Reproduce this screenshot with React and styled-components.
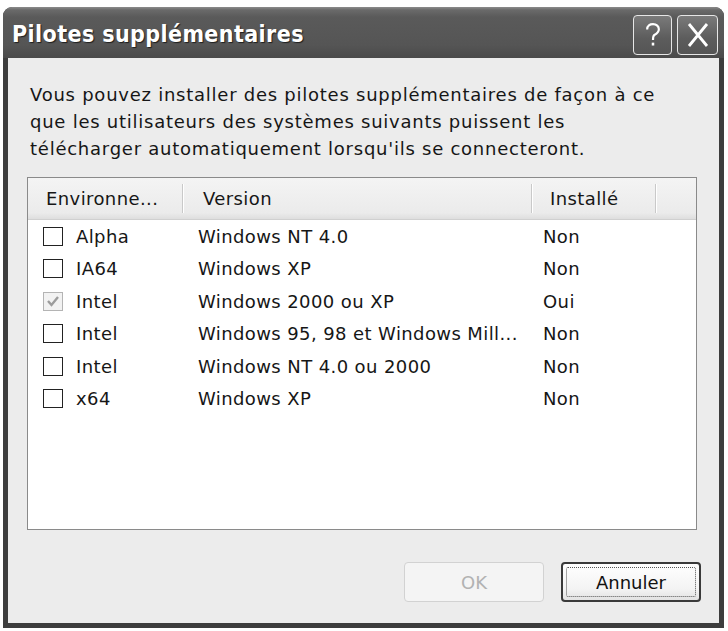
import React from "react";
import styled, { createGlobalStyle } from "styled-components";

const GlobalStyle = createGlobalStyle`
  * {
    box-sizing: border-box;
    margin: 0;
    padding: 0;
  }
  body {
    background: #ffffff;
    font-family: "DejaVu Sans", Verdana, sans-serif;
  }
`;

const Window = styled.div`
  width: 721px;
  height: 621px;
  margin: 7px 0 0 3px;
  display: flex;
  flex-direction: column;
  background: #3d3d3d;
  border-radius: 9px 9px 0 0;
  overflow: hidden;
`;

const TitleBar = styled.div`
  height: 51px;
  display: flex;
  align-items: flex-start;
  justify-content: space-between;
  padding: 8px 6px 0 9px;
  background: linear-gradient(
    to bottom,
    #8c8c8c 0px,
    #6a6a6a 3px,
    #5a5a5a 10px,
    #555555 38px,
    #4a4a4a 51px
  );
`;

const Title = styled.h1`
  font-family: "DejaVu Sans Condensed", "DejaVu Sans", sans-serif;
  font-weight: bold;
  font-size: 23px;
  line-height: 38px;
  color: #ffffff;
  text-shadow: 1px 1px 1px #1e1e1e;
  letter-spacing: 0.4px;
`;

const Controls = styled.div`
  display: flex;
  gap: 5px;
`;

const CaptionButton = styled.div`
  width: ${(p) => p.$w}px;
  height: 40px;
  border: 1.5px solid #e6e6e6;
  border-radius: 4px;
  background: linear-gradient(to bottom, #7a7a7a, #5c5c5c 60%, #555555);
  display: flex;
  align-items: center;
  justify-content: center;
`;

const Client = styled.div`
  flex: 1;
  margin: 0 5px 5px 5px;
  background: #ececec;
  padding: 23px 20px 21px 19px;
  display: flex;
  flex-direction: column;
`;

const Intro = styled.p`
  font-size: 18px;
  line-height: 27px;
  letter-spacing: 0.75px;
  color: #161616;
  padding-left: 3px;
  margin-bottom: 15px;
`;

const ListBox = styled.div`
  width: 670px;
  height: 353px;
  border: 1px solid #8a8a8a;
  background: #ffffff;
  display: flex;
  flex-direction: column;
`;

const HeaderRow = styled.div`
  height: 42px;
  display: flex;
  background: linear-gradient(to bottom, #f4f4f4, #ebebeb 85%, #dedede);
  border-bottom: 1px solid #d0d0d0;
`;

const HeaderCell = styled.div`
  width: ${(p) => p.$w}px;
  padding-left: ${(p) => p.$pad}px;
  display: flex;
  align-items: center;
  font-size: 18px;
  letter-spacing: 0.4px;
  color: #161616;
  position: relative;
  &::after {
    content: "";
    display: ${(p) => (p.$sep ? "block" : "none")};
    position: absolute;
    right: 0;
    top: 6px;
    bottom: 6px;
    width: 1px;
    background: #c9c9c9;
    box-shadow: 1px 0 0 #ffffff;
  }
`;

const Row = styled.div`
  height: 32.5px;
  display: flex;
  align-items: center;
  font-size: 18px;
  letter-spacing: 0.4px;
  color: #161616;
`;

const Cell = styled.div`
  width: ${(p) => p.$w}px;
  padding-left: ${(p) => p.$pad}px;
  display: flex;
  align-items: center;
  white-space: nowrap;
`;

const Check = styled.span`
  width: 20px;
  height: 19px;
  margin-right: 13px;
  border: 1.5px solid ${(p) => (p.$on ? "#b4b4b4" : "#222222")};
  background: ${(p) => (p.$on ? "#f2f2f2" : "#ffffff")};
  display: flex;
  align-items: center;
  justify-content: center;
`;

const Buttons = styled.div`
  margin-top: 32px;
  display: flex;
  justify-content: flex-end;
  gap: 17px;
  margin-right: -2px;
`;

const Button = styled.div`
  width: 140px;
  height: 40px;
  border-radius: 4px;
  display: flex;
  align-items: center;
  justify-content: center;
  font-size: 18px;
  color: ${(p) => (p.$disabled ? "#b2b2b2" : "#111111")};
  background: ${(p) =>
    p.$disabled
      ? "#f4f4f4"
      : "linear-gradient(to bottom, #ffffff, #f3f3f3 70%, #e2e2e2)"};
  border: ${(p) => (p.$disabled ? "1px solid #d2d2d2" : "2px solid #3a3a3a")};
  padding: 3px;
`;

const Focus = styled.span`
  flex: 1;
  align-self: stretch;
  display: flex;
  align-items: center;
  justify-content: center;
  border: 1px dotted #555555;
  border-radius: 2px;
`;

const rows = [
  { env: "Alpha", ver: "Windows NT 4.0", inst: "Non" },
  { env: "IA64", ver: "Windows XP", inst: "Non" },
  { env: "Intel", ver: "Windows 2000 ou XP", inst: "Oui", on: true },
  { env: "Intel", ver: "Windows 95, 98 et Windows Mill...", inst: "Non" },
  { env: "Intel", ver: "Windows NT 4.0 ou 2000", inst: "Non" },
  { env: "x64", ver: "Windows XP", inst: "Non" },
];

const HelpIcon = () => (
  <svg width="18" height="28" viewBox="0 0 20 28">
    <path
      d="M3.5 8 C3.5 3.5 6.5 2 10 2 C14 2 16.5 4.5 16.5 7.5 C16.5 11 14 12.5 11.5 14 C10 15 10 16 10 19.5"
      fill="none"
      stroke="#ffffff"
      strokeWidth="2.4"
    />
    <rect x="8.6" y="22.5" width="2.8" height="3.2" fill="#ffffff" />
  </svg>
);

const CloseIcon = () => (
  <svg width="24" height="26" viewBox="0 0 24 26">
    <path d="M3 2 L21 24 M21 2 L3 24" stroke="#ffffff" strokeWidth="2.8" />
  </svg>
);

const TickIcon = () => (
  <svg width="14" height="13" viewBox="0 0 14 13">
    <path d="M2 6 L5.5 10 L12 2" fill="none" stroke="#9c9c9c" strokeWidth="2.4" />
  </svg>
);

export default function App() {
  return (
    <>
      <GlobalStyle />
      <Window>
        <TitleBar>
          <Title>Pilotes supplémentaires</Title>
          <Controls>
            <CaptionButton $w={39}>
              <HelpIcon />
            </CaptionButton>
            <CaptionButton $w={41}>
              <CloseIcon />
            </CaptionButton>
          </Controls>
        </TitleBar>
        <Client>
          <Intro>
            Vous pouvez installer des pilotes supplémentaires de façon à ce
            <br />
            que les utilisateurs des systèmes suivants puissent les
            <br />
            télécharger automatiquement lorsqu'ils se connecteront.
          </Intro>
          <ListBox>
            <HeaderRow>
              <HeaderCell $w={155} $pad={18} $sep>
                Environne...
              </HeaderCell>
              <HeaderCell $w={349} $pad={20} $sep>
                Version
              </HeaderCell>
              <HeaderCell $w={124} $pad={18} $sep>
                Installé
              </HeaderCell>
            </HeaderRow>
            {rows.map((r, i) => (
              <Row key={i}>
                <Cell $w={155} $pad={15}>
                  <Check $on={r.on}>{r.on && <TickIcon />}</Check>
                  {r.env}
                </Cell>
                <Cell $w={349} $pad={15}>
                  {r.ver}
                </Cell>
                <Cell $w={124} $pad={11}>
                  {r.inst}
                </Cell>
              </Row>
            ))}
          </ListBox>
          <Buttons>
            <Button $disabled>OK</Button>
            <Button>
              <Focus>Annuler</Focus>
            </Button>
          </Buttons>
        </Client>
      </Window>
    </>
  );
}
